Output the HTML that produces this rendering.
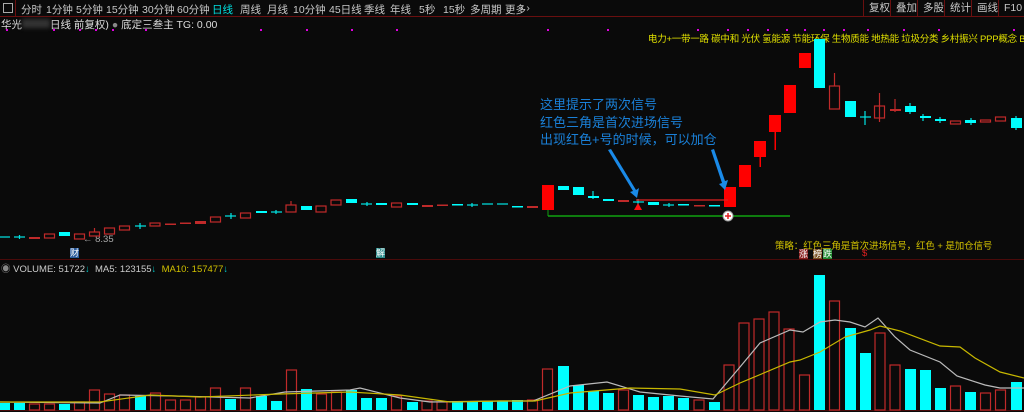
<!DOCTYPE html>
<html><head><meta charset="utf-8"><style>
body{margin:0;width:1024px;height:412px;background:#0a0a0a;overflow:hidden;font-family:"Liberation Sans","Noto Sans CJK SC",sans-serif;}
.t{position:absolute;white-space:nowrap;}
#tb{position:absolute;left:0;top:0;width:1024px;height:16px;border-bottom:1px solid #6a0f0f;font-size:10.5px;color:#c8c8c8;}
#tb span{position:absolute;top:2px}
.rb{position:absolute;top:0;height:16px;border-left:1px solid #6a0f0f;font-size:10.5px;color:#c8c8c8;line-height:16px;padding-left:5px}
</style></head><body>
<div id="tb">
<div style="position:absolute;left:3px;top:3px;width:8px;height:8px;border:1px solid #aaa;"></div>
<div style="position:absolute;left:15px;top:0;width:1px;height:16px;background:#6a0f0f"></div>
<span style="left:21px">分时</span><span style="left:46px">1分钟</span><span style="left:76px">5分钟</span><span style="left:106px">15分钟</span><span style="left:142px">30分钟</span><span style="left:177px">60分钟</span><span style="left:212px;color:#00e0e0">日线</span><span style="left:240px">周线</span><span style="left:267px">月线</span><span style="left:293px">10分钟</span><span style="left:329px">45日线</span><span style="left:364px">季线</span><span style="left:390px">年线</span><span style="left:419px">5秒</span><span style="left:443px">15秒</span><span style="left:470px">多周期</span><span style="left:505px">更多</span><span style="left:520px">› ›</span>
<div class="rb" style="left:863px">复权</div><div class="rb" style="left:890px">叠加</div><div class="rb" style="left:917px">多股</div><div class="rb" style="left:944px">统计</div><div class="rb" style="left:971px">画线</div><div class="rb" style="left:998px">F10</div>
</div>
<div class="t" style="left:1px;top:17px;font-size:10.5px;color:#ddd">华光<span style="display:inline-block;width:28px;height:9px;background:#333;filter:blur(2px)"></span>日线 前复权) <span style="color:#888">●</span> 底定三叁主 TG: 0.00</div>
<div class="t" style="left:648px;top:31px;font-size:9.5px;letter-spacing:-0.25px;color:#e0e000">电力+一带一路 碳中和 光伏 氢能源 节能环保 生物质能 地热能 垃圾分类 乡村振兴 PPP概念 B</div>
<div class="t" style="left:540px;top:96px;font-size:13px;line-height:17.5px;color:#1a80d8">这里提示了两次信号<br>红色三角是首次进场信号<br>出现红色+号的时候，可以加仓</div>
<div class="t" style="left:775px;top:238px;font-size:9.5px;letter-spacing:-0.1px;color:#d0c000">策略：红色三角是首次进场信号，红色 + 是加仓信号</div>
<div class="t" style="left:83px;top:234px;font-size:9.5px;color:#aaa">← 8.35</div>
<div class="t" style="left:70px;top:248px;font-size:9px;color:#fff;background:#2a5a9a;line-height:10px">财</div>
<div class="t" style="left:376px;top:248px;font-size:9px;color:#fff;background:#2a8a8a;line-height:10px">解</div>
<div class="t" style="left:799px;top:249px;font-size:9px;color:#fff;background:#8a2020;line-height:10px">涨</div>
<div class="t" style="left:813px;top:249px;font-size:9px;color:#fff;background:#7a5020;line-height:10px">榜</div>
<div class="t" style="left:823px;top:249px;font-size:9px;color:#fff;background:#208a30;line-height:10px">跌</div>
<div class="t" style="left:862px;top:248px;font-size:9.5px;color:#e02020">$</div>
<div class="t" style="left:1px;top:261px;font-size:9.5px;color:#ccc"><span style="color:#888">◉</span> VOLUME: 51722<span style="color:#0cc">↓</span> &nbsp;MA5: 123155<span style="color:#0cc">↓</span> &nbsp;<span style="color:#d0c000">MA10: 157477</span><span style="color:#0cc">↓</span></div>
<svg style="position:absolute;left:0;top:0" width="1024" height="412">
<g fill="#e000e0"><rect x="6" y="29" width="2" height="2"/><rect x="53" y="29" width="2" height="2"/><rect x="79" y="29" width="2" height="2"/><rect x="95" y="29" width="2" height="2"/><rect x="112" y="29" width="2" height="2"/><rect x="145" y="29" width="2" height="2"/><rect x="260" y="29" width="2" height="2"/><rect x="306" y="29" width="2" height="2"/><rect x="351" y="29" width="2" height="2"/><rect x="396" y="29" width="2" height="2"/><rect x="547" y="29" width="2" height="2"/><rect x="607" y="29" width="2" height="2"/><rect x="697" y="29" width="2" height="2"/><rect x="747" y="29" width="2" height="2"/><rect x="727" y="29" width="2" height="2"/><rect x="767" y="29" width="2" height="2"/><rect x="786" y="29" width="2" height="2"/><rect x="804" y="29" width="2" height="2"/><rect x="823" y="29" width="2" height="2"/><rect x="843" y="29" width="2" height="2"/><rect x="867" y="29" width="2" height="2"/><rect x="903" y="29" width="2" height="2"/><rect x="938" y="29" width="2" height="2"/><rect x="1013" y="29" width="2" height="2"/></g>
<line x1="0" y1="259.5" x2="1024" y2="259.5" stroke="#4a0a0a"/>
<line x1="0" y1="410.5" x2="1024" y2="410.5" stroke="#4a0a0a"/>
<g stroke="#00e5e5" stroke-width="1.2">
<line x1="0" y1="237" x2="10" y2="237"/><line x1="14" y1="237" x2="25" y2="237"/><line x1="19.5" y1="235" x2="19.5" y2="239"/>
<line x1="135" y1="226" x2="146" y2="226"/><line x1="140" y1="223" x2="140" y2="229"/>
<line x1="225" y1="216" x2="236" y2="216"/><line x1="231" y1="213" x2="231" y2="219"/>
<line x1="271" y1="212" x2="282" y2="212"/><line x1="276" y1="210" x2="276" y2="214"/>
<line x1="361" y1="204" x2="372" y2="204"/><line x1="367" y1="202" x2="367" y2="206"/>
<line x1="467" y1="205" x2="478" y2="205"/><line x1="472" y1="203" x2="472" y2="207"/>
<line x1="482" y1="204" x2="493" y2="204"/><line x1="497" y1="204" x2="508" y2="204"/>
<line x1="633" y1="202" x2="644" y2="202"/><line x1="638" y1="199" x2="638" y2="205"/>
<line x1="663" y1="205" x2="674" y2="205"/><line x1="669" y1="203" x2="669" y2="207"/>
<line x1="860" y1="117" x2="871" y2="117"/><line x1="865" y1="111" x2="865" y2="125"/>
<line x1="593" y1="191" x2="593" y2="199"/><line x1="923" y1="114" x2="923" y2="121"/><line x1="940" y1="117" x2="940" y2="123"/><line x1="1016" y1="116" x2="1016" y2="130"/><line x1="910" y1="103" x2="910" y2="114"/><line x1="971" y1="118" x2="971" y2="125"/>
</g>
<g fill="#00ffff">
<rect x="59" y="232" width="11" height="4"/><rect x="256" y="211" width="11" height="2"/><rect x="301" y="206" width="11" height="4"/><rect x="346" y="199" width="11" height="4"/><rect x="376" y="203" width="11" height="2"/><rect x="407" y="203" width="11" height="2"/><rect x="452" y="204" width="11" height="1.5"/><rect x="512" y="206" width="11" height="1.5"/>
<rect x="558" y="186" width="11" height="4"/><rect x="573" y="187" width="11" height="8"/><rect x="588" y="196" width="11" height="2"/><rect x="603" y="199" width="11" height="2"/><rect x="648" y="202" width="11" height="3"/><rect x="678" y="204" width="11" height="1.5"/><rect x="709" y="205" width="11" height="1.5"/>
<rect x="814" y="39" width="11" height="49"/><rect x="845" y="101" width="11" height="16"/><rect x="905" y="106" width="11" height="6"/><rect x="920" y="116" width="11" height="2"/><rect x="935" y="119" width="11" height="2"/><rect x="965" y="120" width="11" height="3"/><rect x="1011" y="118" width="11" height="10"/>
</g>
<g fill="none" stroke="#c02a2a" stroke-width="1.2">
<rect x="44.5" y="234" width="10" height="4"/><rect x="74.5" y="234" width="10" height="5"/><rect x="89.5" y="232" width="10" height="4"/><line x1="94.5" y1="228" x2="94.5" y2="232"/><rect x="104.5" y="228" width="10" height="6"/><rect x="119.5" y="226" width="10" height="4"/>
<rect x="150" y="223" width="10" height="3"/><rect x="210.5" y="217" width="10" height="5"/><rect x="240.5" y="213" width="10" height="5"/><rect x="286" y="205" width="10" height="7"/><line x1="291" y1="201" x2="291" y2="205"/><rect x="316" y="206" width="10" height="6"/><rect x="331" y="200" width="10" height="5"/><rect x="391.5" y="203" width="10" height="4"/>
<rect x="829.5" y="86" width="10" height="23"/><line x1="834.5" y1="73" x2="834.5" y2="86"/><rect x="874.5" y="106" width="10" height="12"/><line x1="879.5" y1="93" x2="879.5" y2="122"/><line x1="895" y1="99" x2="895" y2="112"/><rect x="950.5" y="121" width="10" height="3"/><rect x="980.5" y="120" width="10" height="2"/><rect x="995.5" y="117" width="10" height="4"/>
</g>
<g fill="#c02a2a">
<rect x="29" y="237" width="11" height="2"/><rect x="165" y="223.5" width="11" height="1.5"/><rect x="180" y="222.5" width="11" height="1.5"/><rect x="195" y="221" width="11" height="3"/><rect x="422" y="205" width="11" height="2"/><rect x="437" y="204.5" width="11" height="1.5"/><rect x="527" y="206" width="11" height="2"/><rect x="618" y="200" width="11" height="2"/><rect x="694" y="205" width="11" height="1.5"/><rect x="890" y="109" width="11" height="2"/>
</g>
<g fill="#ff0000">
<rect x="542" y="185" width="12" height="25"/><rect x="724" y="187" width="12" height="20"/><rect x="739" y="165" width="12" height="22"/><rect x="754" y="141" width="12" height="16"/><rect x="769" y="115" width="12" height="17"/><rect x="784" y="85" width="12" height="28"/><rect x="799" y="53" width="12" height="15"/>
<rect x="759.5" y="157" width="1.5" height="10"/><rect x="774.5" y="132" width="1.5" height="18"/>
</g>
<line x1="636" y1="200" x2="728" y2="200" stroke="#e02020" stroke-width="1.2"/>
<line x1="548" y1="216" x2="790" y2="216" stroke="#10c010" stroke-width="1.2"/>
<line x1="548" y1="210" x2="548" y2="216" stroke="#10a010"/>
<polygon points="638,203 634,210 642,210" fill="#ff1010"/>
<circle cx="728" cy="216" r="5" fill="#fff" stroke="#999"/><path d="M725 216h6M728 213v6" stroke="#e02020" stroke-width="1.5"/>
<g fill="#1a8ae8"><polygon points="608,150 611,149 636,190 639,188 637,198 630,192 633,191"/><polygon points="711,150 714,149 725,181 728,180 725,190 719,184 722,183"/></g>
<g fill="#00ffff">
<rect x="0" y="403" width="10" height="7"/><rect x="14" y="403" width="11" height="7"/><rect x="59" y="404" width="11" height="6"/><rect x="135" y="396" width="11" height="14"/><rect x="225" y="399" width="11" height="11"/><rect x="256" y="396" width="11" height="14"/><rect x="271" y="401" width="11" height="9"/><rect x="301" y="389" width="11" height="21"/><rect x="346" y="390" width="11" height="20"/><rect x="361" y="398" width="11" height="12"/><rect x="376" y="398" width="11" height="12"/><rect x="407" y="402" width="11" height="8"/><rect x="452" y="401" width="11" height="9"/><rect x="467" y="402" width="11" height="8"/><rect x="482" y="401" width="11" height="9"/><rect x="497" y="401" width="11" height="9"/><rect x="512" y="400" width="11" height="10"/>
<rect x="558" y="366" width="11" height="44"/><rect x="573" y="385" width="11" height="25"/><rect x="588" y="391" width="11" height="19"/><rect x="603" y="393" width="11" height="17"/><rect x="633" y="395" width="11" height="15"/><rect x="648" y="397" width="11" height="13"/><rect x="663" y="396" width="11" height="14"/><rect x="678" y="398" width="11" height="12"/><rect x="709" y="402" width="11" height="8"/><rect x="814" y="275" width="11" height="135"/><rect x="845" y="328" width="11" height="82"/><rect x="860" y="353" width="11" height="57"/><rect x="905" y="369" width="11" height="41"/><rect x="920" y="370" width="11" height="40"/><rect x="935" y="388" width="11" height="22"/><rect x="965" y="392" width="11" height="18"/><rect x="1011" y="382" width="11" height="28"/>
</g>
<g fill="none" stroke="#c02a2a" stroke-width="1.2">
<rect x="29.5" y="404" width="10" height="6"/><rect x="44.5" y="404" width="10" height="6"/><rect x="74.5" y="402" width="10" height="8"/><rect x="89.5" y="390" width="10" height="20"/><rect x="104.5" y="394" width="10" height="16"/><rect x="119.5" y="395" width="10" height="15"/><rect x="150.5" y="393" width="10" height="17"/><rect x="165.5" y="400" width="10" height="10"/><rect x="180.5" y="400" width="10" height="10"/><rect x="195.5" y="397" width="10" height="13"/><rect x="210.5" y="388" width="10" height="22"/><rect x="240.5" y="388" width="10" height="22"/><rect x="286.5" y="370" width="10" height="40"/><rect x="316.5" y="394" width="10" height="16"/><rect x="331.5" y="392" width="10" height="18"/><rect x="391.5" y="396" width="10" height="14"/><rect x="422" y="401" width="10" height="9"/><rect x="437" y="402" width="10" height="8"/><rect x="527.5" y="400" width="10" height="10"/>
<rect x="542.5" y="369" width="10" height="41"/><rect x="618.5" y="390" width="10" height="20"/><rect x="694" y="400" width="10" height="10"/><rect x="724" y="365" width="10" height="45"/><rect x="739" y="323" width="10" height="87"/><rect x="754" y="319" width="10" height="91"/><rect x="769" y="312" width="10" height="98"/><rect x="784" y="329" width="10" height="81"/><rect x="799.5" y="375" width="10" height="35"/><rect x="829.5" y="301" width="10" height="109"/><rect x="875" y="333" width="10" height="77"/><rect x="890" y="365" width="10" height="45"/><rect x="950.5" y="386" width="10" height="24"/><rect x="980.5" y="393" width="10" height="17"/><rect x="995.5" y="390" width="10" height="20"/>
</g>
<polyline fill="none" stroke="#bbb" stroke-width="1.2" points="0,402 100,403 120,395 175,396 250,398 285,392 350,390 360,388 400,398 430,402 500,401 533,401 570,386 607,382 640,392 680,396 713,399 740,367 760,343 790,330 803,332 820,322 835,320 850,322 865,327 878,318 895,337 910,350 940,362 957,376 985,385 1000,388 1024,388"/>
<polyline fill="none" stroke="#c8b800" stroke-width="1.2" points="0,402 100,402 150,395 200,397 280,394 350,392 400,395 450,402 500,401 535,401 570,393 630,388 680,389 715,395 740,383 790,362 800,360 820,352 845,337 870,330 880,326 900,331 940,346 960,347 975,358 1000,372 1024,378"/>
</svg>
</body></html>
